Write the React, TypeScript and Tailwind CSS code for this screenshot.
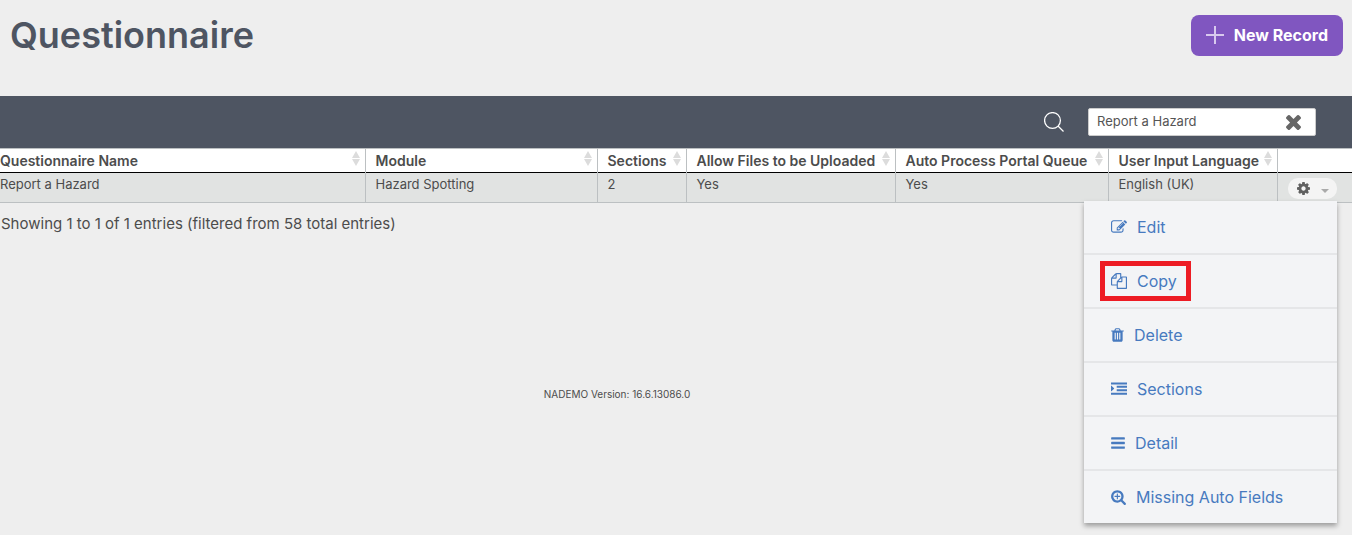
import React from "react";

type Glyph = { viewBox: string; d: string; size: string };

const glyphs: Record<string, Glyph> = {
  edit: {
    viewBox: "0 0 1792 1792",
    size: "h-4 w-4",
    d: "M888 1184l116-116-152-152-116 116v56h96v96h56zm440-720q-16-16-33 1l-350 350q-17 17-1 33t33-1l350-350q17-17 1-33zm80 594v190q0 119-84.5 203.5t-203.5 84.5h-832q-119 0-203.5-84.5t-84.5-203.5v-832q0-119 84.5-203.5t203.5-84.5h832q63 0 117 25 15 7 18 23 3 17-9 29l-49 49q-14 14-32 8-23-6-45-6h-832q-66 0-113 47t-47 113v832q0 66 47 113t113 47h832q66 0 113-47t47-113v-126q0-13 9-22l64-64q15-15 35-7t20 29zm-96-738l288 288-672 672h-288v-288zm444 132l-92 92-288-288 92-92q28-28 68-28t68 28l152 152q28 28 28 68t-28 68z",
  },
  copy: {
    viewBox: "0 0 1792 1792",
    size: "h-4 w-4",
    d: "M1696 384q40 0 68 28t28 68v1216q0 40-28 68t-68 28h-960q-40 0-68-28t-28-68v-288h-544q-40 0-68-28t-28-68v-672q0-40 20-88t48-76l408-408q28-28 76-48t88-20h416q40 0 68 28t28 68v328q68-40 128-40h416zm-544 213l-299 299h299v-299zm-640-384l-299 299h299v-299zm196 647l316-316v-416h-384v416q0 40-28 68t-68 28h-416v640h512v-256q0-40 20-88t48-76zm956 804v-1152h-384v416q0 40-28 68t-68 28h-416v640h896z",
  },
  trash: {
    viewBox: "192 0 1408 1792",
    size: "h-4 w-[13px]",
    d: "M704 1376v-704q0-14-9-23t-23-9h-64q-14 0-23 9t-9 23v704q0 14 9 23t23 9h64q14 0 23-9t9-23zm256 0v-704q0-14-9-23t-23-9h-64q-14 0-23 9t-9 23v704q0 14 9 23t23 9h64q14 0 23-9t9-23zm256 0v-704q0-14-9-23t-23-9h-64q-14 0-23 9t-9 23v704q0 14 9 23t23 9h64q14 0 23-9t9-23zm-544-992h448l-48-117q-7-9-17-11h-317q-10 2-17 11zm928 32v64q0 14-9 23t-23 9h-96v948q0 83-47 143.5t-113 60.5h-832q-66 0-113-58.5t-47-141.5v-952h-96q-14 0-23-9t-9-23v-64q0-14 9-23t23-9h309l70-167q15-37 54-63t79-26h320q40 0 79 26t54 63l70 167h309q14 0 23 9t9 23z",
  },
  indent: {
    viewBox: "0 0 1792 1792",
    size: "h-4 w-4",
    d: "M352 832q0 14-9 23l-288 288q-9 9-23 9-13 0-22.5-9.5t-9.5-22.5v-576q0-13 9.5-22.5t22.5-9.5q14 0 23 9l288 288q9 9 9 23zM0 1312h1792v224h-1792zM640 928h1152v224h-1152zM640 544h1152v224h-1152zM0 160h1792v224h-1792z",
  },
  bars: {
    viewBox: "128 0 1536 1792",
    size: "h-4 w-[14px]",
    d: "M1664 1344v128q0 26-19 45t-45 19h-1408q-26 0-45-19t-19-45v-128q0-26 19-45t45-19h1408q26 0 45 19t19 45zm0-512v128q0 26-19 45t-45 19h-1408q-26 0-45-19t-19-45v-128q0-26 19-45t45-19h1408q26 0 45 19t19 45zm0-512v128q0 26-19 45t-45 19h-1408q-26 0-45-19t-19-45v-128q0-26 19-45t45-19h1408q26 0 45 19t19 45z",
  },
  searchPlus: {
    viewBox: "64 0 1664 1792",
    size: "h-4 w-[15px]",
    d: "M1088 800v64q0 13-9.5 22.5t-22.5 9.5h-224v224q0 13-9.5 22.5t-22.5 9.5h-64q-13 0-22.5-9.5t-9.5-22.5v-224h-224q-13 0-22.5-9.5t-9.5-22.5v-64q0-13 9.5-22.5t22.5-9.5h224v-224q0-13 9.5-22.5t22.5-9.5h64q13 0 22.5 9.5t9.5 22.5v224h224q13 0 22.5 9.5t9.5 22.5zm128 32q0-185-131.5-316.5t-316.5-131.5-316.5 131.5-131.5 316.5 131.5 316.5 316.5 131.5 316.5-131.5 131.5-316.5zm512 832q0 53-37.5 90.5t-90.5 37.5q-54 0-90-38l-343-342q-179 124-399 124-143 0-273.5-55.5t-225-150-150-225-55.5-273.5 55.5-273.5 150-225 225-150 273.5-55.5 273.5 55.5 225 150 150 225 55.5 273.5q0 220-124 399l343 343q37 37 37 90z",
  },
  cog: {
    viewBox: "128 128 1536 1536",
    size: "h-[13px] w-[13px]",
    d: "M1152 896q0-106-75-181t-181-75-181 75-75 181 75 181 181 75 181-75 75-181zm512-109v222q0 12-8 23t-20 13l-185 28q-19 54-39 91 35 50 107 138 10 12 10 25t-9 23q-27 37-99 108t-94 71q-12 0-26-9l-138-108q-44 23-91 38-16 136-29 186-7 28-36 28h-222q-14 0-24.5-8.5t-11.5-21.5l-28-184q-49-16-90-37l-141 107q-10 9-25 9-14 0-25-11-126-114-165-168-7-10-7-23 0-12 8-23 15-21 51-66.5t54-70.5q-27-50-41-99l-183-27q-13-2-21-12.5t-8-23.5v-222q0-12 8-23t19-13l186-28q14-46 39-92-40-57-107-138-10-12-10-24 0-10 9-23 26-36 98.5-107.5t94.5-71.5q13 0 26 10l138 107q44-23 91-38 16-136 29-186 7-28 36-28h222q14 0 24.5 8.5t11.5 21.5l28 184q49 16 90 37l142-107q9-9 24-9 13 0 25 10 129 119 165 170 7 8 7 22 0 12-8 23-15 21-51 66.5t-54 70.5q26 50 41 98l183 28q13 2 21 12.5t8 23.5z",
  },
  times: {
    viewBox: "302 366 1188 1188",
    size: "h-[15px] w-[15px]",
    d: "M1490 1322q0 40-28 68l-136 136q-28 28-68 28t-68-28l-294-294-294 294q-28 28-68 28t-68-28l-136-136q-28-28-28-68t28-68l294-294-294-294q-28-28-28-68t28-68l136-136q28-28 68-28t68 28l294 294 294-294q28-28 68-28t68 28l136 136q28 28 28 68t-28 68l-294 294 294 294q28 28 28 68z",
  },
};

function Icon({ name }: { name: string }) {
  const g = glyphs[name];
  return (
    <svg viewBox={g.viewBox} className={`shrink-0 ${g.size}`} fill="currentColor" aria-hidden="true">
      <path d={g.d} />
    </svg>
  );
}

function SortArrows() {
  return (
    <svg viewBox="0 0 8 15" className="h-[15px] w-2 shrink-0" fill="#dcdcdc" aria-hidden="true">
      <path d="M4 0L8 7H0zM0 8H8L4 15z" />
    </svg>
  );
}

const columns = [
  { label: "Questionnaire Name", value: "Report a Hazard", width: "" },
  { label: "Module", value: "Hazard Spotting", width: "w-[232px]" },
  { label: "Sections", value: "2", width: "w-[89px]" },
  { label: "Allow Files to be Uploaded", value: "Yes", width: "w-[209px]" },
  { label: "Auto Process Portal Queue", value: "Yes", width: "w-[213px]" },
  { label: "User Input Language", value: "English (UK)", width: "w-[169px]" },
];

const actions = [
  { label: "Edit", icon: "edit" },
  { label: "Copy", icon: "copy", marked: true },
  { label: "Delete", icon: "trash" },
  { label: "Sections", icon: "indent" },
  { label: "Detail", icon: "bars" },
  { label: "Missing Auto Fields", icon: "searchPlus" },
];

function ActionMenu() {
  return (
    <ul className="absolute top-7 right-[15px] z-10 w-[253px] divide-y-2 divide-[#e5e6e8] bg-[#f3f4f6] shadow-[0_3px_5px_rgba(0,0,0,0.35)]">
      {actions.map((a) => (
        <li key={a.label}>
          <a href="#" className="flex h-13 items-center pb-px pl-[27px] text-base text-[#477abf]">
            <span className="relative flex items-center gap-[10px]">
              <Icon name={a.icon} />
              {a.label}
              {a.marked && <span className="absolute -inset-y-2 -right-[14px] -left-[11px] border-5 border-[#ed1c24]" />}
            </span>
          </a>
        </li>
      ))}
    </ul>
  );
}

export default function App() {
  return (
    <div className="min-h-screen overflow-x-hidden bg-[#eeeeee] font-['Inter',sans-serif] text-[#4c4c4c]">
      <header className="flex h-24 items-start justify-between pr-[9px] pl-[10px]">
        <h1 className="pt-[13px] text-[36px] leading-[44px] font-semibold text-[#4e5562]">Questionnaire</h1>
        <button className="mt-[15px] flex h-[41px] items-center gap-[10px] rounded-lg bg-[#8056c0] px-[15px] pb-[2px] text-base font-bold text-white">
          <svg viewBox="0 0 18 18" className="h-[18px] w-[18px]" stroke="#d8c9ee" strokeWidth="2" aria-hidden="true">
            <path d="M9 0V18M0 9H18" />
          </svg>
          New Record
        </button>
      </header>

      <div className="flex h-[52px] items-center justify-end gap-6 bg-[#4e5562] pr-9">
        <svg viewBox="0 0 20 20" className="h-5 w-5" fill="none" stroke="#ffffff" strokeWidth="1.3" aria-hidden="true">
          <circle cx="8.5" cy="8.5" r="7.9" />
          <path d="M14 14L19.5 19.5" />
        </svg>
        <div className="flex h-7 w-[228px] items-center rounded-xs border border-[#cccccc] bg-white pr-3.5 pl-2">
          <input
            aria-label="Search"
            defaultValue="Report a Hazard"
            className="min-w-0 flex-1 bg-transparent text-[13px] text-[#555555] outline-none"
          />
          <button aria-label="Clear search" className="pt-px text-[#666666]">
            <Icon name="times" />
          </button>
        </div>
      </div>

      <div className="-ml-[10px]">
        <table className="w-full table-fixed border-collapse text-left text-[13px]">
          <thead>
            <tr className="h-6 border-t border-b border-t-[#bcc0c2] border-b-black bg-white">
              {columns.map((c) => (
                <th key={c.label} className={`border-r border-r-[#bcc0c2] pr-[5px] pl-[10px] text-sm font-semibold whitespace-nowrap ${c.width}`}>
                  <span className="flex items-start justify-between">
                    {c.label}
                    <SortArrows />
                  </span>
                </th>
              ))}
              <th className="w-[75px]" aria-label="Actions" />
            </tr>
          </thead>
          <tbody>
            <tr className="h-[30px] border-b border-b-[#bcc0c2] bg-[#e1e3e2]">
              {columns.map((c) => (
                <td key={c.label} className="border-r border-r-[#bcc0c2] pl-[10px] align-top leading-[22px]">
                  {c.value}
                </td>
              ))}
              <td className="relative pt-[5px] pl-[10px] align-top">
                <button
                  aria-label="Row actions"
                  className="flex h-[21px] w-[49px] items-center justify-between rounded-[10px] bg-[#f4f4f4] pr-2 pl-[9px] text-[#606060]"
                >
                  <Icon name="cog" />
                  <svg viewBox="0 0 8 8" className="h-2 w-2" fill="#aaaaaa" aria-hidden="true">
                    <path d="M0 4H8L4 8z" />
                  </svg>
                </button>
                <ActionMenu />
              </td>
            </tr>
          </tbody>
        </table>
      </div>

      <p className="pt-[9px] pl-px text-[15px] leading-6">Showing 1 to 1 of 1 entries (filtered from 58 total entries)</p>
      <footer className="pt-[150px] pr-[118px] text-center text-[10px] leading-4">NADEMO Version: 16.6.13086.0</footer>
    </div>
  );
}
